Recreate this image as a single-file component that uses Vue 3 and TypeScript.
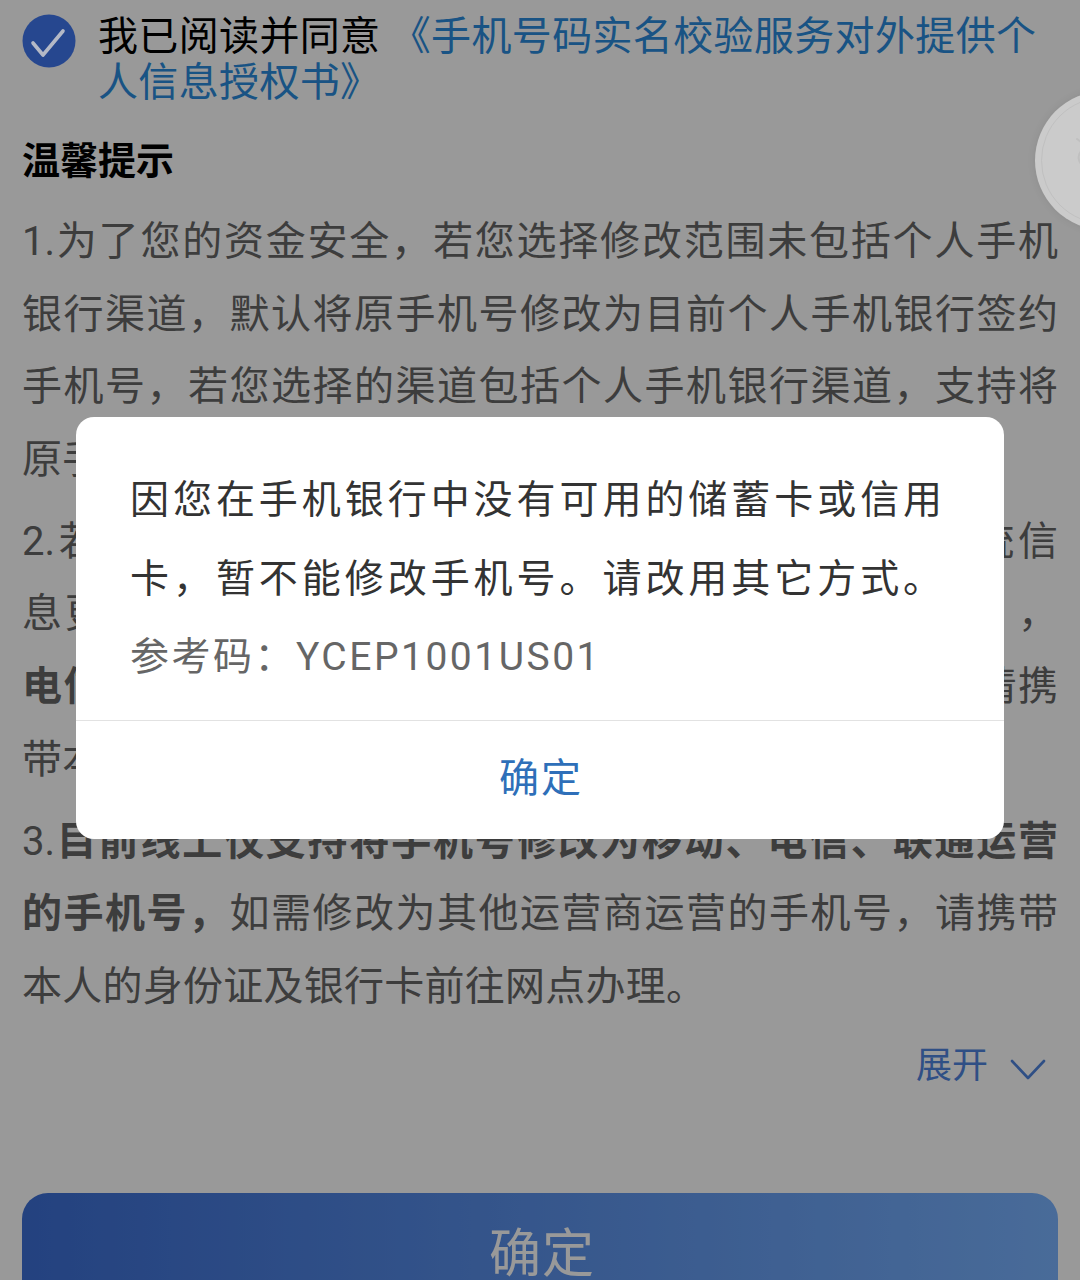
<script setup lang="ts">
interface Seg { text: string; bold?: boolean }
interface Line { segs: Seg[]; last?: boolean }
const paragraphs: Line[][] = [
  [
    { segs: [{ text: '1.为了您的资金安全，若您选择修改范围未包括个人手机' }] },
    { segs: [{ text: '银行渠道，默认将原手机号修改为目前个人手机银行签约' }] },
    { segs: [{ text: '手机号，若您选择的渠道包括个人手机银行渠道，支持将' }] },
    { segs: [{ text: '原手机号修改为目前个人手机银行签约手机号。' }], last: true },
  ],
  [
    { segs: [{ text: '2.若手机号已停用，请及时修改，以免影响接收系统信' }] },
    { segs: [{ text: '息更新，如动账通知、交易验证码等短信服务提醒等 ，' }] },
    { segs: [{ text: '电信', bold: true }, { text: '运营商的手机号修改为其他运营商手机号码时，请携' }] },
    { segs: [{ text: '带本人的身份证及银行卡前往网点办理。' }], last: true },
  ],
  [
    { segs: [{ text: '3.' }, { text: '目前线上仅支持将手机号修改为移动、电信、联通运营', bold: true }] },
    { segs: [{ text: '的手机号，', bold: true }, { text: '如需修改为其他运营商运营的手机号，请携带' }] },
    { segs: [{ text: '本人的身份证及银行卡前往网点办理。' }], last: true },
  ],
]
</script>

<template>
  <div class="page">
    <section class="agree">
      <svg class="check" viewBox="0 0 54 54" aria-hidden="true">
        <circle cx="27" cy="27" r="26.5" fill="#26478f" />
        <path d="M11 29 L21 41 L41 17" fill="none" stroke="#b4b9c6" stroke-width="3.6" stroke-linecap="round" stroke-linejoin="round" />
      </svg>
      <p class="agree-text">我已阅读并同意 <span class="link">《手机号码实名校验服务对外提供个<br />人信息授权书》</span></p>
    </section>

    <h2 class="title">温馨提示</h2>

    <div class="tips">
      <p v-for="(para, i) in paragraphs" :key="i" class="para">
        <span v-for="(line, j) in para" :key="j" class="line" :class="{ last: line.last }">
          <span v-for="(seg, k) in line.segs" :key="k" :class="{ strong: seg.bold }">{{ seg.text }}</span>
        </span>
      </p>
    </div>

    <div class="expand">
      <span>展开</span>
      <svg class="chevron" viewBox="0 0 36 24" aria-hidden="true">
        <path d="M2 3 L18 20 L34 3" fill="none" stroke="#4f84de" stroke-width="2.6" stroke-linecap="round" stroke-linejoin="round" />
      </svg>
    </div>

    <button class="submit" type="button">确定</button>

    <div class="mask"></div>

    <div class="float-ball">
      <div class="float-ring"></div>
      <svg class="float-mark" viewBox="0 0 20 30" aria-hidden="true">
        <path d="M6 2 C10 5 13 7 15 9 M10 14 C7 18 7 23 10 27" fill="none" stroke="#c0c0c0" stroke-width="2" stroke-linecap="round" />
      </svg>
    </div>

    <div class="dialog">
      <div class="dialog-body">
        <p class="dialog-msg">因您在手机银行中没有可用的储蓄卡或信用<br />卡，暂不能修改手机号。请改用其它方式。</p>
        <p class="dialog-code">参考码：YCEP1001US01</p>
      </div>
      <div class="dialog-action">确定</div>
    </div>
  </div>
</template>

<style scoped>
.page {
  position: relative;
  width: 1080px;
  height: 1280px;
  overflow: hidden;
  background: #fff;
  font-family: Roboto, "Noto Sans CJK SC", sans-serif;
  color: #666;
}
p, h2 { margin: 0; }

.agree {
  display: flex;
  gap: 22px;
  padding: 14px 22px 0 22px;
}
.check {
  flex: none;
  position: relative;
  z-index: 2;
  width: 54px;
  height: 54px;
}
.agree-text {
  font-size: 40px;
  line-height: 46px;
  letter-spacing: 0.35px;
  color: #000;
  white-space: nowrap;
}
.link { color: #2b8bdc; }

.title {
  margin: 30px 0 0 22px;
  font-size: 38px;
  line-height: 50px;
  font-weight: 700;
  color: #000;
}

.tips {
  padding: 20px 22px 0 22px;
}
.para {
  font-size: 40px;
  line-height: 72.6px;
  margin-bottom: 9.5px;
  white-space: nowrap;
}
.line {
  display: block;
  text-align: justify;
  text-align-last: justify;
}
.line.last {
  text-align-last: left;
  letter-spacing: 0.25px;
}
.strong { font-weight: 700; }

.expand {
  display: flex;
  align-items: center;
  justify-content: flex-end;
  gap: 22px;
  padding: 0 34px 0 0;
  margin-top: 17px;
  font-size: 36px;
  line-height: 50px;
  color: #4f84de;
}
.chevron {
  width: 36px;
  height: 24px;
  margin-top: 8px;
}

.submit {
  display: block;
  margin: 102px 22px 0;
  width: 1036px;
  height: 114px;
  border: 0;
  border-radius: 26px;
  background: linear-gradient(90deg, #3c6ed4, #7ab3ff);
  color: #fff;
  font-family: inherit;
  font-size: 52px;
  letter-spacing: 1px;
  padding: 0 0 0 4px;
}

.mask {
  position: absolute;
  inset: 0;
  background: rgba(0, 0, 0, 0.4);
}

.float-ball {
  position: absolute;
  left: 1035px;
  top: 91px;
  width: 139px;
  height: 139px;
  border-radius: 50%;
  background: #cbcbcb;
  box-shadow: 0 0 8px rgba(0, 0, 0, 0.08);
}
.float-ring {
  position: absolute;
  inset: 6px;
  border-radius: 50%;
  border: 1.5px solid #c0c0c0;
}
.float-mark {
  position: absolute;
  left: 36px;
  top: 46px;
  width: 20px;
  height: 30px;
}

.dialog {
  position: absolute;
  left: 76px;
  top: 417px;
  width: 928px;
  height: 422px;
  display: flex;
  flex-direction: column;
  background: #fff;
  border-radius: 18px;
  overflow: hidden;
}
.dialog-body {
  flex: none;
  height: 304px;
  box-sizing: border-box;
  padding: 44px 0 0 54px;
  border-bottom: 1.5px solid #e2e2e2;
  white-space: nowrap;
}
.dialog-msg {
  font-size: 39px;
  line-height: 78.5px;
  letter-spacing: 3.95px;
  color: #333;
}
.dialog-code {
  font-size: 39px;
  line-height: 78px;
  letter-spacing: 2.5px;
  color: #666;
}
.dialog-action {
  flex: 1;
  display: flex;
  align-items: center;
  justify-content: center;
  padding: 0 0 10px 2px;
  font-size: 40px;
  letter-spacing: 2px;
  color: #2e6fb9;
}
</style>
